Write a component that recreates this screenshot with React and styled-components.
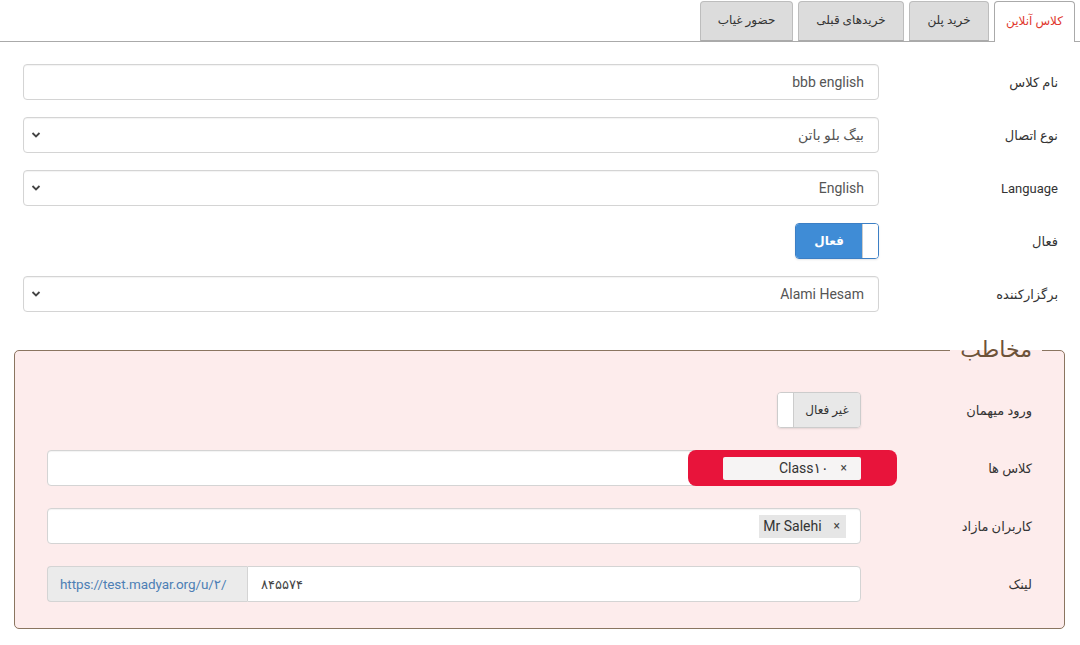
import React from 'react';
import styled, { createGlobalStyle } from 'styled-components';

const GlobalStyle = createGlobalStyle`
  body {
    margin: 0;
    background: #fff;
    font-family: Roboto, "DejaVu Sans", sans-serif;
    font-size: 14px;
    color: #333;
  }
`;

const Page = styled.div`
  direction: rtl;
  width: 1080px;
  height: 645px;
  overflow: hidden;
`;

const TabBar = styled.ul`
  display: flex;
  gap: 5px;
  margin: 0;
  padding: 1px 5px 0 0;
  list-style: none;
  border-bottom: 1px solid #aaa;
  height: 40px;
`;

const Tab = styled.li`
  box-sizing: border-box;
  width: ${p => p.$w}px;
  height: ${p => (p.$active ? 41 : 40)}px;
  display: flex;
  align-items: center;
  justify-content: center;
  font-size: 12px;
  border: 1px solid ${p => (p.$active ? '#aaa' : '#bdbdbd')};
  border-bottom: ${p => (p.$active ? 'none' : '1px solid #aaa')};
  border-radius: 4px 4px 0 0;
  background: ${p => (p.$active ? '#fff' : '#dcdcdc')};
  color: ${p => (p.$active ? '#e0362c' : '#333')};
  padding-bottom: 2px;
`;

const Form = styled.div`
  display: grid;
  grid-template-columns: 179px 1fr;
  row-gap: 17px;
  padding: 22px 22px 0 23px;
`;

const Label = styled.div`
  display: flex;
  align-items: center;
  font-size: 13px;
  color: #333;
  height: 36px;
`;

const Control = styled.div`
  box-sizing: border-box;
  height: 36px;
  border: 1px solid #d4d4d4;
  border-radius: 4px;
  background: #fff;
  box-shadow: inset 0 1px 1px rgba(0, 0, 0, 0.05);
  display: flex;
  align-items: center;
  padding: 0 14px;
  color: #555;
  position: relative;
`;

const Arrow = styled.svg`
  margin-right: auto;
  margin-left: -7px;
`;

const Switch = styled.div`
  box-sizing: border-box;
  width: 84px;
  height: 36px;
  display: flex;
  border: 1px solid ${p => (p.$on ? '#3c7fc5' : '#ccc')};
  border-radius: 4px;
  overflow: hidden;
  box-shadow: 0 1px 2px rgba(0, 0, 0, 0.1);
`;

const Knob = styled.div`
  width: 15px;
  background: #fff;
  border-left: ${p => (p.$on ? '1px solid #ccc' : 'none')};
  border-right: ${p => (p.$on ? 'none' : '1px solid #ccc')};
`;

const SwitchLabel = styled.div`
  flex: 1;
  display: flex;
  align-items: center;
  justify-content: center;
  font-size: 12px;
  font-weight: ${p => (p.$on ? 700 : 400)};
  background: ${p => (p.$on ? '#3f8cd6' : '#e8e8e8')};
  color: ${p => (p.$on ? '#fff' : '#333')};
`;

const Fieldset = styled.fieldset`
  margin: 27px 15px 0 14px;
  padding: 31px 32px 26px 32px;
  border: 1px solid #8a7560;
  border-radius: 5px;
  background: #fdecec;
`;

const Legend = styled.legend`
  padding: 0 10px;
  margin-right: -10px;
  font-size: 22px;
  color: #6d5238;
  line-height: 1;
`;

const InnerForm = styled.div`
  display: grid;
  grid-template-columns: 171px 1fr;
  row-gap: 22px;
`;

const Chip = styled.span`
  display: inline-flex;
  align-items: center;
  gap: 12px;
  height: 23px;
  padding: 0 6px 0 4px;
  background: ${p => (p.$light ? '#f4f4f4' : '#e6e6e6')};
  color: #333;
  font-size: 14px;
  direction: ltr;
`;

const Close = styled.span`
  font-size: 12px;
  color: #444;
`;

const Highlight = styled.div`
  position: absolute;
  top: -1px;
  right: -37px;
  width: 209px;
  height: 36px;
  box-sizing: border-box;
  background: #e8143b;
  border-radius: 8px;
  display: flex;
  align-items: center;
  padding: 0 36px 0 35px;
`;

const HighlightChip = styled(Chip)`
  flex: 1;
  justify-content: flex-end;
  padding-right: 14px;
  background: #f6f4f4;
  border-radius: 2px;
`;

const InputGroup = styled.div`
  direction: ltr;
  display: flex;
  height: 36px;
`;

const Addon = styled.div`
  box-sizing: border-box;
  width: 200px;
  display: flex;
  align-items: center;
  padding: 0 12px;
  background: #ebebeb;
  border: 1px solid #d4d4d4;
  border-right: none;
  border-radius: 4px 0 0 4px;
  color: #4d7fb5;
  font-size: 13.5px;
  white-space: nowrap;
  letter-spacing: -0.1px;
`;

const GroupInput = styled.div`
  box-sizing: border-box;
  flex: 1;
  display: flex;
  align-items: center;
  padding: 0 13px;
  background: #fff;
  border: 1px solid #d4d4d4;
  border-radius: 0 4px 4px 0;
  color: #444;
  font-size: 13px;
`;

function Chevron() {
  return (
    <Arrow width="10" height="8" viewBox="0 0 10 8">
      <path d="M1.5 2 L5 5.5 L8.5 2" fill="none" stroke="#444" strokeWidth="1.8" />
    </Arrow>
  );
}

export default function App() {
  return (
    <Page>
      <GlobalStyle />
      <TabBar>
        <Tab $w={81} $active>کلاس آنلاین</Tab>
        <Tab $w={80}>خرید پلن</Tab>
        <Tab $w={106}>خریدهای قبلی</Tab>
        <Tab $w={93}>حضور غیاب</Tab>
      </TabBar>
      <Form>
        <Label>نام کلاس</Label>
        <Control>bbb english</Control>
        <Label>نوع اتصال</Label>
        <Control>
          بیگ بلو باتن
          <Chevron />
        </Control>
        <Label>Language</Label>
        <Control>
          English
          <Chevron />
        </Control>
        <Label>فعال</Label>
        <div>
          <Switch $on>
            <Knob $on />
            <SwitchLabel $on>فعال</SwitchLabel>
          </Switch>
        </div>
        <Label>برگزارکننده</Label>
        <Control>
          Alami Hesam
          <Chevron />
        </Control>
      </Form>
      <Fieldset>
        <Legend>مخاطب</Legend>
        <InnerForm>
          <Label>ورود میهمان</Label>
          <div>
            <Switch>
              <SwitchLabel>غیر فعال</SwitchLabel>
              <Knob />
            </Switch>
          </div>
          <Label>کلاس ها</Label>
          <Control>
            <Highlight>
              <HighlightChip $light>
                Class۱۰
                <Close>×</Close>
              </HighlightChip>
            </Highlight>
          </Control>
          <Label>کاربران مازاد</Label>
          <Control>
            <Chip>
              Mr Salehi
              <Close>×</Close>
            </Chip>
          </Control>
          <Label>لینک</Label>
          <InputGroup>
            <Addon>https://test.madyar.org/u/۲/</Addon>
            <GroupInput>۸۴۵۵۷۴</GroupInput>
          </InputGroup>
        </InnerForm>
      </Fieldset>
    </Page>
  );
}
